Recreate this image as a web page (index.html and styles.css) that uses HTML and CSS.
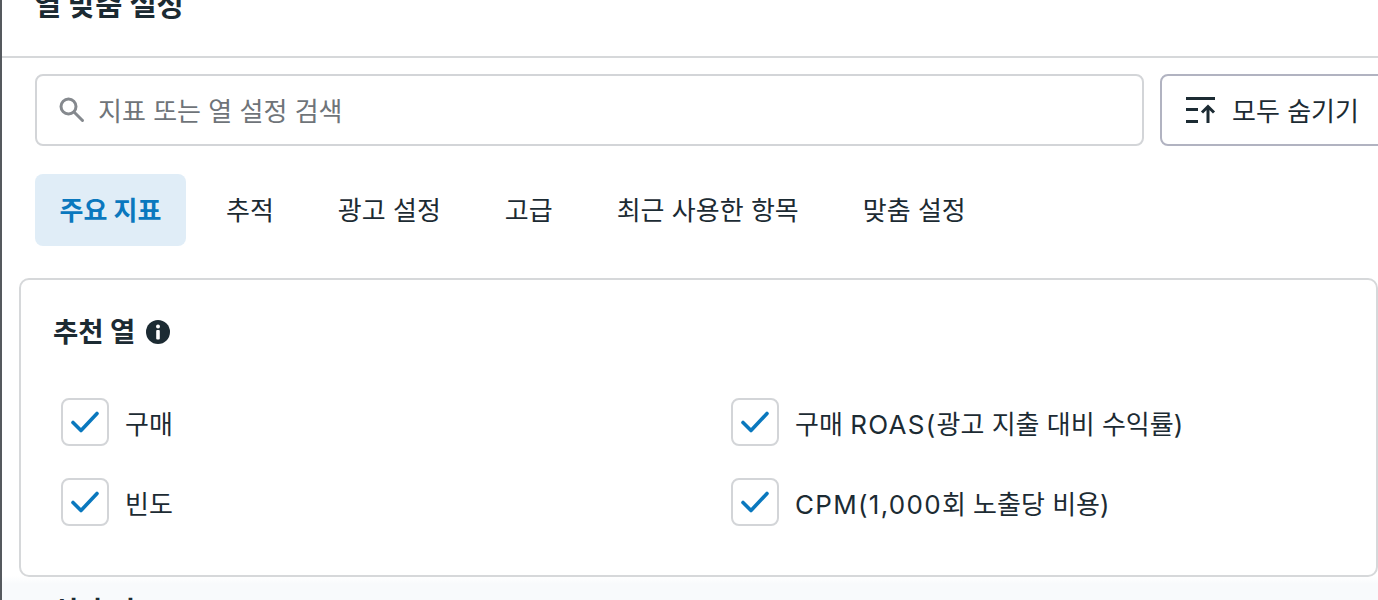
FILE: index.html
```html
<!DOCTYPE html>
<html lang="ko">
<head>
  <meta charset="utf-8">
  <title>열 맞춤 설정</title>
  <link rel="stylesheet" href="styles.css">
</head>
<body>
  <div class="dialog">
    <div class="dialog-header">
      <h1>열 맞춤 설정</h1>
    </div>

    <div class="dialog-body">
      <div class="search-row">
        <div class="search-box">
          <svg width="26" height="26" viewBox="0 0 26 26" fill="none" stroke="#85898e" stroke-width="3">
            <circle cx="9.500" cy="9.500" r="7.500"/>
            <path d="M15 15l8.500 8.500" stroke-linecap="round"/>
          </svg>
          <span class="label">지표 또는 열 설정 검색</span>
        </div>
        <div class="hide-button">
          <svg width="32" height="26" viewBox="0 0 32 26" fill="none" stroke="#1c2b33" stroke-width="3">
            <path d="M1 1.500h29M1 12.500h12M1 24.500h12"/>
            <path d="M23 26V10M17 15.500l6-6 6 6"/>
          </svg>
          <span class="label">모두 숨기기</span>
        </div>
      </div>

      <div class="tabs">
        <div class="tab tab-active">주요 지표</div>
        <div class="tab">추적</div>
        <div class="tab">광고 설정</div>
        <div class="tab">고급</div>
        <div class="tab">최근 사용한 항목</div>
        <div class="tab">맞춤 설정</div>
      </div>

      <div class="card">
        <div class="card-title">
          <h2>추천 열</h2>
          <svg width="24" height="24" viewBox="0 0 24 24">
            <circle cx="12" cy="12" r="12" fill="#1c2b33"/>
            <circle cx="12" cy="6.500" r="2" fill="#fff"/>
            <rect x="10.200" y="10" width="3.600" height="9.500" rx="1" fill="#fff"/>
          </svg>
        </div>
        <div class="check-grid">
          <label class="check-item">
            <span class="check-box"><svg width="28" height="24" viewBox="0 0 28 24" fill="none" stroke="#0a78be" stroke-width="3.600" stroke-linecap="round" stroke-linejoin="round"><path d="M2 12.500l8 8L26 3.500"/></svg></span>
            <span>구매</span>
          </label>
          <label class="check-item">
            <span class="check-box"><svg width="28" height="24" viewBox="0 0 28 24" fill="none" stroke="#0a78be" stroke-width="3.600" stroke-linecap="round" stroke-linejoin="round"><path d="M2 12.500l8 8L26 3.500"/></svg></span>
            <span>구매 <span class="latin">ROAS(</span>광고 지출 대비 수익률)</span>
          </label>
          <label class="check-item">
            <span class="check-box"><svg width="28" height="24" viewBox="0 0 28 24" fill="none" stroke="#0a78be" stroke-width="3.600" stroke-linecap="round" stroke-linejoin="round"><path d="M2 12.500l8 8L26 3.500"/></svg></span>
            <span>빈도</span>
          </label>
          <label class="check-item">
            <span class="check-box"><svg width="28" height="24" viewBox="0 0 28 24" fill="none" stroke="#0a78be" stroke-width="3.600" stroke-linecap="round" stroke-linejoin="round"><path d="M2 12.500l8 8L26 3.500"/></svg></span>
            <span><span class="latin">CPM(1,000</span>회 노출당 비용)</span>
          </label>
        </div>
      </div>

      <h2 class="next-title">성과 지표</h2>
    </div>
  </div>
</body>
</html>
```

FILE: styles.css
```css
html, body {
  height: 100%;
}

body {
  margin: 0;
  overflow: hidden;
  background: #fff;
  color: #1c2b33;
  font-family: "Inter", "Noto Sans CJK KR", sans-serif;
}

.dialog {
  height: 600px;
  overflow: hidden;
  border-left: 2px solid #55595e;
  box-sizing: border-box;
}

.dialog-header {
  display: flex;
  height: 56px;
  padding-left: 32px;
  border-bottom: 2px solid #d6d8da;
}

.dialog-header h1 {
  margin: -12px 0 0;
  font-size: 29.500px;
  line-height: 32px;
  font-weight: 700;
}

.dialog-body {
  height: 542px;
  padding: 16px 0 0 17px;
  background: linear-gradient(#fff 518px, #f8fafc 526px);
  box-sizing: border-box;
}

.search-row {
  display: flex;
  gap: 16px;
  margin-left: 16px;
  margin-right: -40px;
}

.search-box {
  flex: 0 0 1109px;
  height: 72px;
  display: flex;
  align-items: center;
  gap: 13px;
  padding-left: 22px;
  border: 2px solid #d3d5d8;
  border-radius: 8px;
  box-sizing: border-box;
  font-size: 26px;
  color: #6f7479;
}

.hide-button {
  flex: 0 0 260px;
  height: 72px;
  display: flex;
  align-items: center;
  gap: 15px;
  padding-left: 23px;
  border: 2px solid #b1b3c1;
  border-radius: 8px;
  box-sizing: border-box;
  font-size: 26px;
}

.label {
  margin-top: -2px;
}

.tabs {
  display: flex;
  margin: 28px 0 0 16px;
}

.tab {
  height: 72px;
  display: flex;
  align-items: center;
  padding: 0 24px 3px;
  margin-right: 16px;
  border-radius: 8px;
  box-sizing: border-box;
  font-size: 26px;
}

.tab-active {
  width: 151px;
  justify-content: center;
  background: #e0edf7;
  color: #0a78be;
  font-weight: 700;
}

.card {
  height: 299px;
  margin-top: 32px;
  padding: 0 32px;
  border: 2px solid #d6d8da;
  border-radius: 10px;
  background: #fff;
  box-sizing: border-box;
}

.card-title {
  display: flex;
  align-items: center;
  gap: 11px;
  height: 32px;
  padding-top: 36px;
}

.card-title h2, .next-title {
  margin: 0;
  font-size: 27.500px;
  line-height: 32px;
  font-weight: 700;
}

.check-grid {
  display: grid;
  grid-template-columns: 670px 1fr;
  row-gap: 32px;
  margin: 50px 0 0 8px;
}

.check-item {
  display: flex;
  align-items: center;
  gap: 16px;
  height: 48px;
  font-size: 26px;
}

.latin {
  letter-spacing: 1.300px;
}

.check-box {
  width: 48px;
  height: 48px;
  display: flex;
  align-items: center;
  justify-content: center;
  border: 2px solid #d3d5d8;
  border-radius: 8px;
  box-sizing: border-box;
}

.next-title {
  margin: 18px 0 0 34px;
}
```
